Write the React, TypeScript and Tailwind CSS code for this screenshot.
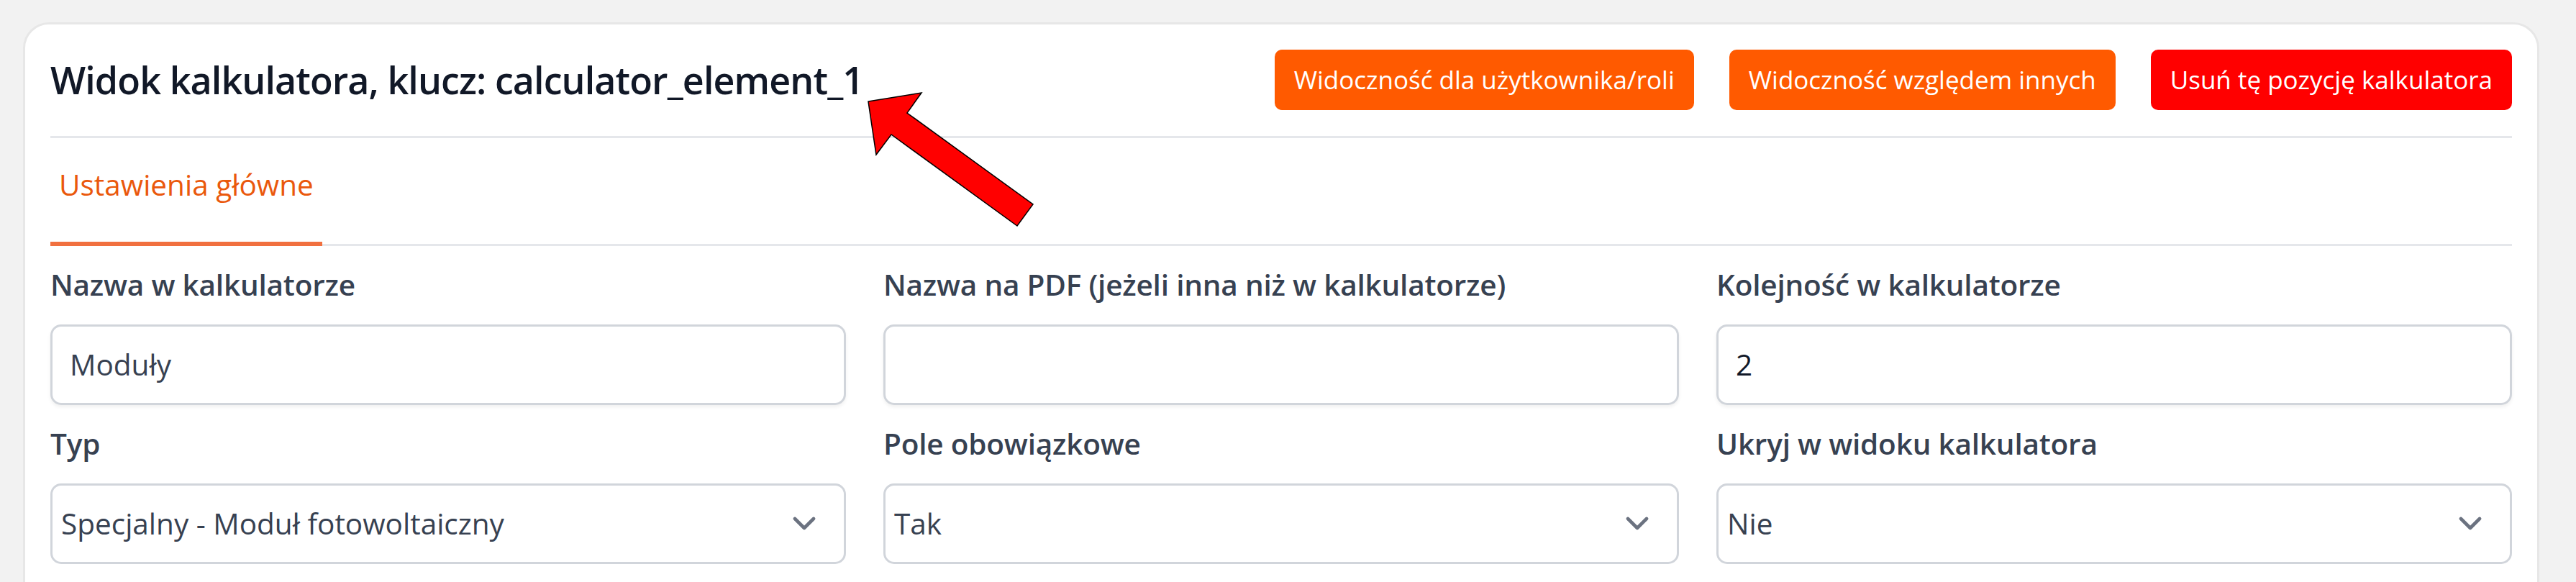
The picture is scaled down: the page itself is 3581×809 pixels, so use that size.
import React from "react";

const Chevron = () => (
  <svg width="34" height="20" viewBox="0 0 34 20" fill="none" className="shrink-0">
    <path d="M4 3 L17 16 L30 3" stroke="#6b7280" strokeWidth="4.6" strokeLinecap="round" strokeLinejoin="round" />
  </svg>
);

const Label = ({ children }: { children: React.ReactNode }) => (
  <div className="text-[40.5px] leading-[63px] font-semibold tracking-[-0.2px] text-[#374151] mb-[24px] whitespace-nowrap">{children}</div>
);

const TextField = ({ label, value, dark }: { label: string; value: string; dark?: boolean }) => (
  <div className="flex flex-col">
    <Label>{label}</Label>
    <div className="h-[112px] border-[3px] border-[#d1d5db] rounded-[15px] bg-white shadow-[0_3px_5px_rgba(0,0,0,0.06)] flex items-center pl-[24px]">
      <span className={`text-[40.5px] ${dark ? "text-[#111827]" : "text-[#374151]"}`}>{value}</span>
    </div>
  </div>
);

const SelectField = ({ label, value }: { label: string; value: string }) => (
  <div className="flex flex-col">
    <Label>{label}</Label>
    <div className="h-[112px] border-[3px] border-[#d1d5db] rounded-[15px] bg-white flex items-center justify-between pl-[12px] pr-[38px]">
      <span className="text-[40.5px] text-[#374151]">{value}</span>
      <Chevron />
    </div>
  </div>
);

export default function App() {
  return (
    <div className="relative min-h-[809px] bg-[#f2f2f2] pt-[31px] pl-[32px] pr-[51px] font-['Open_Sans',sans-serif] overflow-hidden">
      <div className="bg-white border-[3px] border-[#e7e7e7] rounded-[36px] px-[35px] pt-[35px] pb-[60px]">
        <div className="flex items-center justify-between pb-[36px] border-b-[3px] border-[#e5e7eb]">
          <h1 className="text-[52px] leading-[1.2] font-semibold tracking-[-0.9px] text-[#111827] whitespace-nowrap">
            Widok kalkulatora, klucz: calculator_element_1
          </h1>
          <div className="flex gap-[49px]">
            <button className="h-[84px] px-[27px] rounded-[10px] bg-[#ff5a00] text-white text-[35px] whitespace-nowrap">
              Widoczność dla użytkownika/roli
            </button>
            <button className="h-[84px] px-[27px] rounded-[10px] bg-[#ff5a00] text-white text-[35px] whitespace-nowrap">
              Widoczność względem innych
            </button>
            <button className="h-[84px] px-[27px] rounded-[10px] bg-[#ff0000] text-white text-[35px] whitespace-nowrap">
              Usuń tę pozycję kalkulatora
            </button>
          </div>
        </div>

        <div className="flex border-b-[3px] border-[#e5e7eb]">
          <div className="-mb-[3px] pt-[33px] pb-[48px] px-[12px] border-b-[6px] border-[#f1703f] text-[40.5px] leading-[63px] font-medium text-[#ea580c] whitespace-nowrap">
            Ustawienia główne
          </div>
        </div>

        <div className="grid grid-cols-3 gap-x-[52px] gap-y-[22px] pt-[22px]">
          <TextField label="Nazwa w kalkulatorze" value="Moduły" />
          <TextField label="Nazwa na PDF (jeżeli inna niż w kalkulatorze)" value="" />
          <TextField label="Kolejność w kalkulatorze" value="2" dark />
          <SelectField label="Typ" value="Specjalny - Moduł fotowoltaiczny" />
          <SelectField label="Pole obowiązkowe" value="Tak" />
          <SelectField label="Ukryj w widoku kalkulatora" value="Nie" />
        </div>
      </div>

      <svg className="absolute left-0 top-0 pointer-events-none" width="3581" height="809">
        <polygon
          points="1207,141 1281,129 1261,157 1436,284 1414,314 1239,187 1218,215"
          fill="#ff0000"
          stroke="#000000"
          strokeWidth="1.5"
          strokeLinejoin="miter"
        />
      </svg>
    </div>
  );
}
